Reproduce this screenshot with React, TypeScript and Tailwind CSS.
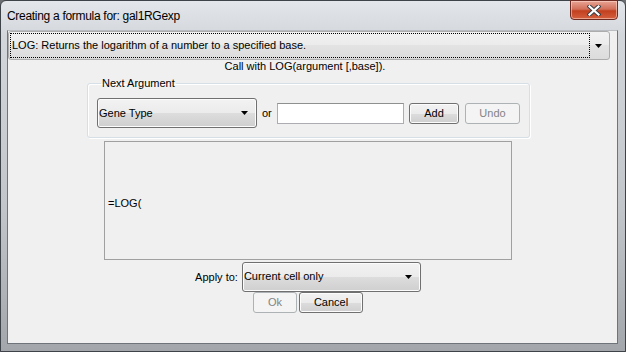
import React from 'react';

function Arrow() {
  return (
    <svg width="7" height="4" viewBox="0 0 7 4" className="shrink-0">
      <path d="M0 0h7L3.5 4z" fill="#000" />
    </svg>
  );
}

function CloseGlyph() {
  return (
    <svg width="14" height="11" viewBox="0 0 14 11">
      <path d="M2.5 1.5l9 8M11.5 1.5l-9 8" stroke="#3b3f45" strokeWidth="4.2" strokeLinecap="square" />
      <path d="M2.5 1.5l9 8M11.5 1.5l-9 8" stroke="#ffffff" strokeWidth="2.2" strokeLinecap="square" />
    </svg>
  );
}

export default function App() {
  return (
    <div className="w-[626px] h-[352px] overflow-hidden bg-[#6b6f74] font-['Liberation_Sans',Arial,sans-serif] text-[11px] text-black">
      <div className="flex h-full flex-col rounded-t-[6px] border border-[#3e4349] bg-[linear-gradient(to_bottom,#e3e6ea_0%,#d3d7db_10%,#c2c6cb_60%,#a3a7ac_100%)]">
        {/* title bar */}
        <div className="flex h-[29px] shrink-0 items-start justify-between">
          <span className="self-center pl-[6px] text-[12px] tracking-[-0.3px] text-black">
            Creating a formula for: gal1RGexp
          </span>
          <button className="-mt-px mr-[7px] flex h-[20px] w-[48px] items-center justify-center rounded-b-[4px] border border-[#6d2b22] bg-[linear-gradient(to_bottom,#e8a493_0%,#d2705a_45%,#c2401f_55%,#d5603e_100%)] shadow-[inset_0_0_0_1px_rgba(255,220,210,0.55)]">
            <CloseGlyph />
          </button>
        </div>

        {/* client area */}
        <div className="ml-[6px] h-[314px] w-[611px] border border-[#6f747a] border-t-[#b9bdc2] bg-[#f0f0f0]">
          <div className="flex w-[602px] flex-col items-center">
            {/* function chooser */}
            <div className="flex h-[29px] w-[602px] items-center rounded-[3px] border border-[#acacac] bg-[linear-gradient(to_bottom,#f2f2f2_0%,#ebebeb_50%,#e3e3e3_50%,#dcdcdc_100%)] pl-[1px] pr-[7px]">
              <div className="flex h-[25px] w-[580px] items-center border border-dotted border-black pl-[1px]">
                LOG: Returns the logarithm of a number to a specified base.
              </div>
              <div className="flex flex-1 justify-end">
                <Arrow />
              </div>
            </div>

            <div className="-mt-[1px] h-[14px] pr-[8px] leading-[14px]">Call with LOG(argument [,base]).</div>

            {/* next argument group */}
            <fieldset className="mt-[4px] ml-[79px] w-[442px] self-start rounded-[3px] border border-[#d5dfe5] px-[9px] pb-[9px] shadow-[inset_1px_1px_0_#ffffff,1px_1px_0_#ffffff]">
              <legend className="ml-[4px] px-[1px] leading-[13px]">Next Argument</legend>
              <div className="mt-[8px] flex items-center">
                <div className="flex h-[30px] w-[160px] items-center justify-between rounded-[3px] border border-[#707070] bg-[linear-gradient(to_bottom,#f2f2f2_0%,#ebebeb_50%,#dddddd_50%,#cfcfcf_100%)] pl-[1px] pr-[8px] shadow-[inset_0_0_0_1px_#fcfcfc]">
                  <span>Gene Type</span>
                  <Arrow />
                </div>
                <span className="ml-[5px] w-[11px]">or</span>
                <div className="ml-[4px] h-[21px] w-[127px] border border-[#abadb3] border-t-[#8e8f8f] bg-white" />
                <button className="ml-[5px] h-[21px] w-[50px] rounded-[3px] border border-[#707070] bg-[linear-gradient(to_bottom,#f2f2f2_0%,#ebebeb_50%,#dddddd_50%,#cfcfcf_100%)] shadow-[inset_0_0_0_1px_#fcfcfc]">
                  Add
                </button>
                <button className="ml-[6px] h-[21px] w-[55px] rounded-[3px] border border-[#adb2b5] bg-[#f4f4f4] text-[#838383]">
                  Undo
                </button>
              </div>
            </fieldset>

            {/* formula text */}
            <div className="mt-[3px] ml-[96px] flex h-[119px] w-[408px] self-start items-center border border-[#a0a0a0] pl-[3px] pt-[6px]">
              =LOG(
            </div>

            {/* apply to */}
            <div className="mt-[2px] mr-[2px] flex items-center">
              <span className="mr-[4px]">Apply to:</span>
              <div className="flex h-[30px] w-[179px] items-center justify-between rounded-[3px] border border-[#707070] bg-[linear-gradient(to_bottom,#f2f2f2_0%,#ebebeb_50%,#dddddd_50%,#cfcfcf_100%)] pl-[1px] pr-[8px] shadow-[inset_0_0_0_1px_#fcfcfc]">
                <span className="-mt-[2px]">Current cell only</span>
                <Arrow />
              </div>
            </div>

            <div className="mr-[2px] flex gap-[2px]">
              <button className="h-[21px] w-[44px] rounded-[3px] border border-[#adb2b5] bg-[#f4f4f4] text-[#838383]">
                Ok
              </button>
              <button className="h-[21px] w-[64px] rounded-[3px] border border-[#707070] bg-[linear-gradient(to_bottom,#f2f2f2_0%,#ebebeb_50%,#dddddd_50%,#cfcfcf_100%)] shadow-[inset_0_0_0_1px_#fcfcfc]">
                Cancel
              </button>
            </div>
          </div>
        </div>
      </div>
    </div>
  );
}
